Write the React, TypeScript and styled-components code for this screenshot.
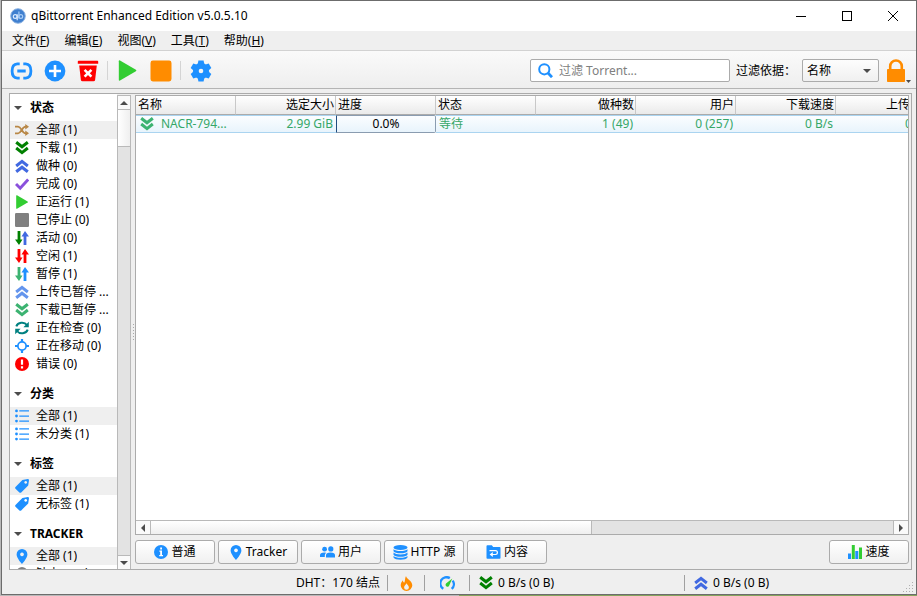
import React from "react";
import styled, { createGlobalStyle, css } from "styled-components";

const Global = createGlobalStyle`
  * { box-sizing: border-box; }
  html, body { margin: 0; padding: 0; }
  body {
    background: linear-gradient(90deg, #b9b9b9 0, #b9b9b9 50%, #86a35c 50%, #86a35c 100%);
    color: #000;
    overflow: hidden;
  }
  body, button, input, select, table {
    font-family: "Noto Sans", "Noto Sans CJK SC", sans-serif;
    font-size: 12px;
    line-height: 18px;
  }
  button, input, select { margin: 0; padding: 0; color: inherit; }
  svg { display: block; flex: none; }
`;

const BLUE = "#1e90ff";
const NAVY = "#4169e1";
const GREEN = "#32cd32";
const DARK_GREEN = "#008000";
const SEA = "#3cb371";
const ORANGE = "#ff8c00";

const AppWindow = styled.div`
  display: flex;
  flex-direction: column;
  height: calc(100vh - 1px);
  margin-left: 1px;
  background: #efefef;
  border: 1px solid #6c6c6c;
`;

/* Title bar */
const TitleBar = styled.header`
  display: flex;
  align-items: center;
  height: 30px;
  flex: none;
  padding-left: 8px;
  background: #fff;
`;
const Title = styled.h1`
  flex: 1;
  margin: 0 0 0 5px;
  font-size: 12px;
  font-weight: 400;
`;
const CaptionButton = styled.button`
  display: flex;
  align-items: center;
  justify-content: center;
  width: 46px;
  height: 30px;
  border: 0;
  background: transparent;
`;

/* Menu bar */
const MenuBar = styled.nav`
  display: flex;
  flex: none;
  gap: 1px;
  height: 20px;
  padding: 1px 3px 0;
  border-bottom: 1px solid #d2d2d2;
`;
const MenuButton = styled.button`
  padding: 0 7px;
  border: 0;
  background: transparent;
  u { text-underline-offset: 1px; }
`;

/* Tool bar */
const ToolBar = styled.div`
  display: flex;
  align-items: center;
  flex: none;
  height: 38px;
  padding: 2px 4px 0 3px;
  background: linear-gradient(#fafafa, #eeeeee);
  border-bottom: 1px solid #b4b4b4;
`;
const ToolButton = styled.button`
  position: relative;
  display: flex;
  align-items: center;
  justify-content: center;
  width: 33px;
  height: 32px;
  flex: none;
  border: 0;
  background: transparent;
`;
const ToolDivider = styled.span`
  width: 1px;
  height: 19px;
  margin: 0 3px;
  background: #d4d4d4;
`;
const Spacer = styled.span`
  flex: 1;
`;
const SearchBox = styled.label`
  display: flex;
  align-items: center;
  gap: 6px;
  width: 200px;
  height: 23px;
  padding: 0 7px;
  background: #fff;
  border: 1px solid #ababab;
  border-radius: 2px;
`;
const SearchInput = styled.input`
  flex: 1;
  min-width: 0;
  border: 0;
  outline: 0;
  background: transparent;
  &::placeholder { color: #808080; opacity: 1; }
`;
const FilterLabel = styled.label`
  width: 66px;
  margin-left: 6px;
  white-space: nowrap;
`;
const SelectWrap = styled.span`
  display: grid;
  align-items: center;
  width: 77px;
  height: 23px;
  border: 1px solid #ababab;
  border-radius: 2px;
  background: linear-gradient(#fdfdfd, #f0f0f0);
  > * { grid-area: 1 / 1; }
  > svg { justify-self: end; margin-right: 7px; pointer-events: none; }
`;
const FilterSelect = styled.select`
  appearance: none;
  width: 100%;
  height: 21px;
  padding: 0 20px 0 4px;
  border: 0;
  background: transparent;
`;
const MenuMark = styled.svg`
  position: absolute;
  right: 1px;
  bottom: 4px;
`;

/* Main area */
const Main = styled.main`
  display: flex;
  flex: 1;
  min-height: 0;
  margin: 4px 4px 0 7px;
  border: 1px solid #ababab;
`;
const SideBar = styled.aside`
  display: flex;
  flex: none;
  width: 121px;
`;
const FilterList = styled.div`
  flex: 1;
  min-width: 0;
  padding-top: 1px;
  overflow: hidden;
  background: #fff;
`;
const FilterGroup = styled.section`
  margin-bottom: 8px;
`;
const GroupHeader = styled.button`
  display: flex;
  align-items: center;
  gap: 8px;
  width: 100%;
  height: 26px;
  padding-left: 4px;
  border: 0;
  background: transparent;
  font-weight: 700;
`;
const FilterRow = styled.button<{ $active?: boolean }>`
  display: flex;
  align-items: center;
  gap: 7px;
  width: 100%;
  height: 18px;
  padding: 0 5px;
  border: 0;
  background: ${(p) => (p.$active ? "#efefef" : "transparent")};
  white-space: nowrap;
  text-align: left;
`;
const FilterText = styled.span`
  overflow: hidden;
  text-overflow: ellipsis;
`;
const Gutter = styled.div`
  display: flex;
  align-items: center;
  justify-content: center;
  width: 4px;
  flex: none;
  &::after {
    content: "";
    width: 1px;
    height: 16px;
    background: repeating-linear-gradient(#a8a8a8 0 1px, transparent 1px 3px);
  }
`;

/* Scroll bars */
const ScrollBar = styled.div<{ $across?: boolean }>`
  display: flex;
  flex: none;
  background: #e3e3e3;
  ${(p) =>
    p.$across
      ? css`
          height: 14px;
          border-top: 1px solid #b9b9b9;
        `
      : css`
          flex-direction: column;
          width: 14px;
          margin-top: 1px;
          border: 1px solid #b9b9b9;
          border-width: 1px 1px 0 1px;
        `}
`;
const ScrollStep = styled.button<{ $across?: boolean }>`
  display: flex;
  align-items: center;
  justify-content: center;
  flex: none;
  width: ${(p) => (p.$across ? "14px" : "12px")};
  height: 13px;
  border: 0;
  background: #fafafa;
`;
const ScrollTrack = styled.div<{ $across?: boolean }>`
  display: flex;
  flex: 1;
  flex-direction: ${(p) => (p.$across ? "row" : "column")};
  border: 0 solid #b9b9b9;
  border-width: ${(p) => (p.$across ? "0 1px" : "1px 0")};
`;
const ScrollThumb = styled.div<{ $across?: boolean }>`
  background: linear-gradient(${(p) => (p.$across ? "180deg" : "90deg")}, #fff, #efefef);
  ${(p) =>
    p.$across
      ? css`
          width: 59.5%;
          border-right: 1px solid #b9b9b9;
        `
      : css`
          height: 37px;
          border-bottom: 1px solid #b9b9b9;
        `}
`;

/* Transfer table */
const Content = styled.div`
  display: flex;
  flex-direction: column;
  flex: 1;
  min-width: 0;
  padding: 1px 2px 5px 0;
`;
const TableFrame = styled.div`
  display: flex;
  flex-direction: column;
  flex: 1;
  min-height: 0;
  border: 1px solid #ababab;
  background: #fff;
`;
const TableView = styled.div`
  flex: 1;
  min-height: 0;
  overflow: hidden;
`;
const Table = styled.table`
  width: 800px;
  table-layout: fixed;
  border-collapse: separate;
  border-spacing: 0;
`;
const HeadCell = styled.th<{ $right?: boolean }>`
  height: 19px;
  padding: 0 1px 0 2px;
  border-right: 1px solid #c8c8c8;
  border-bottom: 1px solid #ababab;
  background: linear-gradient(#fff, #eaeaea);
  font-weight: 400;
  line-height: 18px;
  text-align: ${(p) => (p.$right ? "right" : "left")};
`;
const Cell = styled.td<{ $right?: boolean }>`
  height: 18px;
  padding: 0 3px;
  border: 0 solid #aad4f0;
  border-width: 1px 0;
  background: linear-gradient(#fbfdff, #e8f4fc);
  color: #36a768;
  line-height: 16px;
  white-space: nowrap;
  overflow: hidden;
  text-overflow: ellipsis;
  text-align: ${(p) => (p.$right ? "right" : "left")};
`;
const ProgressCell = styled(Cell)`
  padding: 0;
  border-color: #8a9cb0;
  border-left: 1px solid #1f4d80;
  border-right: 1px solid #8a9cb0;
  border-radius: 0 2px 2px 0;
  color: #000;
  text-align: center;
`;
const NameBox = styled.span`
  display: flex;
  align-items: center;
  gap: 7px;
  margin-left: 1px;
`;

/* Detail tabs */
const Tabs = styled.div`
  display: flex;
  flex: none;
  gap: 3px;
  padding-top: 5px;
`;
const TabButton = styled.button`
  display: flex;
  align-items: center;
  justify-content: center;
  gap: 3px;
  width: 80px;
  height: 24px;
  flex: none;
  border: 1px solid #ababab;
  border-radius: 3px;
  background: linear-gradient(#fff, #f0f0f0);
  white-space: nowrap;
`;

/* Status bar */
const StatusBar = styled.footer`
  display: flex;
  align-items: center;
  flex: none;
  height: 24px;
  padding-top: 2px;
`;
const StatusText = styled.span`
  flex: 1;
  padding-right: 7px;
  text-align: right;
`;
const StatusItem = styled.button<{ $width: number }>`
  display: flex;
  align-items: center;
  justify-content: ${(p) => (p.$width > 100 ? "flex-start" : "center")};
  gap: 5px;
  width: ${(p) => p.$width}px;
  height: 16px;
  padding-left: ${(p) => (p.$width > 100 ? "9px" : "0")};
  border: 0;
  border-left: 1px solid #a0a0a0;
  background: transparent;
`;
const Grip = styled.svg`
  align-self: flex-end;
  margin-left: 3px;
`;

/* Icons */
type GlyphProps = { color: string; size?: number };

const Chevrons = ({ color, up, size = 14 }: GlyphProps & { up?: boolean }) => (
  <svg width={size} height={size} viewBox="0 0 14 14" fill="none" stroke={color} strokeWidth="3">
    {up ? <path d="M1.2 7 7 2.4 12.8 7M1.2 12.800 7 8.200l5.800 4.600" /> : <path d="M1.2 1.200 7 5.800l5.800-4.600M1.200 7 7 11.600 12.800 7" />}
  </svg>
);
const Arrows = ({ down, up }: { down: string; up: string }) => (
  <svg width="14" height="14" viewBox="0 0 14 14">
    <path d="M0 8.500h2.600V0h2.800v8.500H7.500L4 14z" fill={down} />
    <path d="M6.500 5.500h2.100V14h2.800V5.500H14L10 0z" fill={up} />
  </svg>
);
const Play = ({ size = 14 }: { size?: number }) => (
  <svg width={size} height={size} viewBox="0 0 14 14">
    <path d="M1.2.8Q1.2 0 2 .3L12.6 6.5q.7.5 0 1L2 13.7q-.8.3-.8-.5z" fill={GREEN} />
  </svg>
);
const Shuffle = () => (
  <svg width="14" height="14" viewBox="0 0 15 14">
    <path d="M0 3.5h3.3c3.6 0 4.2 7 8 7H13M0 10.5h3.3c3.6 0 4.2-7 8-7H13" fill="none" stroke="#b88746" strokeWidth="1.9" />
    <path d="M11 .5l4 3-4 3zM11 7.5l4 3-4 3z" fill="#b88746" />
  </svg>
);
const Check = () => (
  <svg width="14" height="14" viewBox="0 0 14 14">
    <path d="M1 7l4.2 4.2L13.2 2.4" fill="none" stroke="#8a50dc" strokeWidth="3" />
  </svg>
);
const Square = () => (
  <svg width="14" height="14" viewBox="0 0 14 14">
    <rect width="14" height="14" rx="1.2" fill="#808080" />
  </svg>
);
const Refresh = () => (
  <svg width="14" height="14" viewBox="0 0 14 14">
    <path d="M1.3 5.4A6 5.2 0 0 1 12 4M12.7 8.6A6 5.2 0 0 1 2 10" fill="none" stroke="#008080" strokeWidth="2" />
    <path d="M13.8.8v5.4H8.4zM.2 13.2V7.8h5.4z" fill="#008080" />
  </svg>
);
const Target = () => (
  <svg width="14" height="14" viewBox="0 0 14 14" fill="none" stroke={BLUE} strokeWidth="1.7">
    <circle cx="7" cy="7" r="4.1" />
    <path d="M7 0v3M7 11v3M0 7h3M11 7h3" strokeWidth="2.2" />
  </svg>
);
const ErrorMark = () => (
  <svg width="14" height="14" viewBox="0 0 14 14">
    <circle cx="7" cy="7" r="7" fill="#f00" />
    <path d="M5.9 2.6h2.2v5.2H5.9zM5.9 9.3h2.2v2.2H5.9z" fill="#fff" />
  </svg>
);
const Lines = () => (
  <svg width="14" height="14" viewBox="0 0 14 14" fill={BLUE}>
    <path d="M4.3 1.3H14v1.3H4.3zM4.3 6.4H14v1.3H4.3zM4.3 11.5H14v1.3H4.3z" />
    <circle cx="1.5" cy="1.9" r="1.4" />
    <circle cx="1.5" cy="7" r="1.4" />
    <circle cx="1.5" cy="12.1" r="1.4" />
  </svg>
);
const Tag = () => (
  <svg width="14" height="14" viewBox="0 0 14 14">
    <path fillRule="evenodd" d="M7.4.9 12.8 0q1.2 0 1.2 1.2l-.8 5.2-7 7q-.9.8-1.8 0L.5 9.7q-.8-.9 0-1.800zM10.700 2a1.400 1.400 0 1 0 .01 0z" fill={BLUE} />
  </svg>
);
const Pin = ({ color = BLUE }: { color?: string }) => (
  <svg width="14" height="15" viewBox="0 0 14 15">
    <path fillRule="evenodd" d="M7 0a5.4 5.4 0 0 1 5.4 5.4C12.4 9 7 15 7 15S1.6 9 1.6 5.4A5.4 5.4 0 0 1 7 0zm0 3.5a1.9 1.9 0 1 0 .01 0z" fill={color} />
  </svg>
);
const Triangle = ({ turn = "down", size = 8 }: { turn?: "down" | "up" | "left" | "right"; size?: number }) => {
  const d = { down: "M0 2h8L4 6z", up: "M0 6h8L4 2z", left: "M6 0v8L2 4z", right: "M2 0v8l4-4z" }[turn];
  return (
    <svg width={size} height={size} viewBox="0 0 8 8">
      <path d={d} fill="#4c4c4c" />
    </svg>
  );
};
const Logo = () => (
  <svg width="16" height="16" viewBox="0 0 16 16" fill="none">
    <circle cx="8" cy="8" r="7.3" fill="#3f7fcf" stroke="#8fb4e2" strokeWidth="1" />
    <g strokeWidth="1.2">
      <circle cx="5.2" cy="8.5" r="1.9" stroke="#dcebff" />
      <path d="M7.2 6.2v6" stroke="#dcebff" />
      <circle cx="10.8" cy="8.5" r="1.9" stroke="#a9cdf7" />
      <path d="M8.9 3.5v7" stroke="#a9cdf7" />
    </g>
  </svg>
);
const Link = () => (
  <svg width="23" height="18" viewBox="0 0 22 18" fill="none" stroke={BLUE} strokeWidth="2.8">
    <path d="M9.2 1.9H6.800Q1.600 2.200 1.600 9t5.200 7.100h2.400M12.800 1.900h2.400Q20.400 2.200 20.400 9t-5.200 7.100h-2.400M6.800 9h8.400" />
  </svg>
);
const Plus = () => (
  <svg width="22" height="22" viewBox="0 0 22 22">
    <circle cx="11" cy="11" r="10.4" fill={BLUE} />
    <path d="M11 5v12M5 11h12" stroke="#fff" strokeWidth="2.6" />
  </svg>
);
const Trash = () => (
  <svg width="22" height="22" viewBox="0 0 22 22">
    <path d="M1.6.7h18.8q.8 0 .8.8v2.3H.8V1.5q0-.8.8-.8zM2.2 5.6h17.6l-1.7 14.3q-.2 1.4-1.6 1.4h-11q-1.4 0-1.6-1.4z" fill="#f00" />
    <path d="M7.6 9.8l6.8 6.8M14.4 9.8l-6.8 6.8" stroke="#fff" strokeWidth="2.6" />
  </svg>
);
const Stop = () => (
  <svg width="22" height="22" viewBox="0 0 22 22">
    <rect x=".5" y=".5" width="21" height="21" rx="2.4" fill={ORANGE} />
  </svg>
);
const Gear = () => (
  <svg width="22" height="22" viewBox="0 0 22 22">
    <g fill={BLUE}>
      <circle cx="11" cy="11" r="8" />
      {[0, 60, 120].map((a) => (
        <path key={a} d="M8.4.6h5.2l.8 4v12.8l-.8 4H8.4l-.8-4V4.6z" transform={`rotate(${a} 11 11)`} />
      ))}
    </g>
    <circle cx="11" cy="11" r="2.3" fill="#f5f5f5" />
  </svg>
);
const Search = () => (
  <svg width="15" height="15" viewBox="0 0 15 15" fill="none" stroke={BLUE}>
    <circle cx="6.3" cy="6.3" r="5.1" strokeWidth="2" />
    <path d="M10 10l4 4.2" strokeWidth="2.8" />
  </svg>
);
const Lock = () => (
  <svg width="20" height="24" viewBox="0 0 20 24">
    <path d="M4.2 11V7.3a5.8 5.8 0 0 1 11.6 0V11" fill="none" stroke={ORANGE} strokeWidth="2.6" />
    <rect x="1" y="10" width="18" height="13" rx=".8" fill={ORANGE} />
  </svg>
);
const Info = () => (
  <svg width="14" height="14" viewBox="0 0 14 14">
    <circle cx="7" cy="7" r="7" fill={BLUE} />
    <path d="M6.2 2.6h1.8v1.8H6.2zM5.4 5.6H8v4.5h1v1.1H5.2v-1.1h1V6.7h-.8z" fill="#fff" />
  </svg>
);
const Peers = () => (
  <svg width="15" height="12" viewBox="0 0 15 12" fill={BLUE}>
    <circle cx="4.6" cy="3.2" r="2.4" />
    <circle cx="10.8" cy="2.9" r="2.6" />
    <path d="M0 11V9.2q0-2.6 4.4-2.6 1 0 1.8.2-1.4 1-1.4 2.6V11zM6 11.4V9.2q0-2.6 4.5-2.6T15 9.2v2.2z" />
  </svg>
);
const Database = () => (
  <svg width="15" height="15" viewBox="0 0 15 15" fill={BLUE}>
    <ellipse cx="7.5" cy="2.6" rx="7" ry="2.5" />
    <path d="M.5 4.3q2 1.8 7 1.8t7-1.8v2q-1.6 2-7 2t-7-2zM.5 7.6q2 1.9 7 1.9t7-1.9v2.1q-1.6 2-7 2t-7-2zM.5 11q2 1.8 7 1.8t7-1.8v1.6q-1.6 2.2-7 2.2t-7-2.2z" />
  </svg>
);
const FolderSync = () => (
  <svg width="15" height="14" viewBox="0 0 15 14">
    <path d="M.5 1.2q0-.9.9-.9h4.4l1.4 1.6h6.4q.9 0 .9.9v10.1q0 .8-.9.8H1.4q-.9 0-.9-.8z" fill={BLUE} />
    <path d="M3.5 5.7h6q1.9 0 1.9 1.9t-1.9 1.9H6" fill="none" stroke="#fff" strokeWidth="1.2" />
    <path d="M6.8 7.1v4.8L3.6 9.5z" fill="#fff" />
  </svg>
);
const Bars = () => (
  <svg width="14" height="14" viewBox="0 0 14 14">
    <path d="M0 8.5h3V14H0zM7.3 6h3v8h-3z" fill={BLUE} />
    <path d="M3.8 0h3v14h-3zM11 2.4h3V14h-3z" fill={GREEN} />
  </svg>
);
const Flame = () => (
  <svg width="13" height="15" viewBox="0 0 13 15">
    <path fillRule="evenodd" d="M6 0c.2 2.9 6.3 4.6 6.3 9.3A5.8 5.8 0 0 1 6.5 15 5.8 5.8 0 0 1 .7 9.3C.7 7 2 5.2 3 4.2c0 1.3.3 2.1 1.2 2.5C5.4 5 4.7 2 6 0zm.7 7.3C5.8 9 4.1 9.6 4.1 11.4a2.4 2.4 0 0 0 4.8 0C8.9 9.8 7.2 9 6.7 7.3z" fill={ORANGE} />
  </svg>
);
const Gauge = () => (
  <svg width="15" height="14" viewBox="0 0 15 14">
    <path d="M3.3 12.8A6 6 0 0 1 9.8 2.1M12.6 4.6A6 6 0 0 1 11.700 12.800" fill="none" stroke={BLUE} strokeWidth="2.4" />
    <path d="M12.300 2.400 9.200 9.600a1.900 1.900 0 1 1-3.200-2z" fill={GREEN} />
  </svg>
);

const STATUS_FILTERS: [React.ReactNode, string][] = [
  [<Shuffle />, "全部 (1)"],
  [<Chevrons color={DARK_GREEN} />, "下载 (1)"],
  [<Chevrons color={NAVY} up />, "做种 (0)"],
  [<Check />, "完成 (0)"],
  [<Play />, "正运行 (1)"],
  [<Square />, "已停止 (0)"],
  [<Arrows down={DARK_GREEN} up={NAVY} />, "活动 (0)"],
  [<Arrows down="#f00" up="#f00" />, "空闲 (1)"],
  [<Arrows down={SEA} up={BLUE} />, "暂停 (1)"],
  [<Chevrons color="#6495ed" up />, "上传已暂停 ..."],
  [<Chevrons color={SEA} />, "下载已暂停 ..."],
  [<Refresh />, "正在检查 (0)"],
  [<Target />, "正在移动 (0)"],
  [<ErrorMark />, "错误 (0)"],
];

const GROUPS: { title: string; rows: [React.ReactNode, string][] }[] = [
  { title: "状态", rows: STATUS_FILTERS },
  { title: "分类", rows: [[<Lines />, "全部 (1)"], [<Lines />, "未分类 (1)"]] },
  { title: "标签", rows: [[<Tag />, "全部 (1)"], [<Tag />, "无标签 (1)"]] },
  { title: "TRACKER", rows: [[<Pin />, "全部 (1)"], [<Pin color="#808080" />, "缺少 tracker"]] },
];

const MENUS = [
  ["文件", "F"],
  ["编辑", "E"],
  ["视图", "V"],
  ["工具", "T"],
  ["帮助", "H"],
];

const COLUMNS: [string, boolean][] = [
  ["名称", false],
  ["选定大小", true],
  ["进度", false],
  ["状态", false],
  ["做种数", true],
  ["用户", true],
  ["下载速度", true],
  ["上传速度", true],
];

const TABS: [React.ReactNode, string][] = [
  [<Info />, "普通"],
  [<Pin />, "Tracker"],
  [<Peers />, "用户"],
  [<Database />, "HTTP 源"],
  [<FolderSync />, "内容"],
];

export default function App() {
  return (
    <>
      <Global />
      <AppWindow>
        <TitleBar>
          <Logo />
          <Title>qBittorrent Enhanced Edition v5.0.5.10</Title>
          <CaptionButton aria-label="最小化">
            <svg width="10" height="10"><path d="M0 5.5h10" stroke="#000" /></svg>
          </CaptionButton>
          <CaptionButton aria-label="最大化">
            <svg width="10" height="10"><rect x=".5" y=".5" width="9" height="9" fill="none" stroke="#000" /></svg>
          </CaptionButton>
          <CaptionButton aria-label="关闭">
            <svg width="10" height="10"><path d="M0 0l10 10M10 0L0 10" stroke="#000" /></svg>
          </CaptionButton>
        </TitleBar>

        <MenuBar>
          {MENUS.map(([name, key]) => (
            <MenuButton key={key}>{name}(<u>{key}</u>)</MenuButton>
          ))}
        </MenuBar>

        <ToolBar>
          <ToolButton aria-label="添加链接"><Link /></ToolButton>
          <ToolButton aria-label="添加文件"><Plus /></ToolButton>
          <ToolButton aria-label="移除"><Trash /></ToolButton>
          <ToolDivider />
          <ToolButton aria-label="启动"><Play size={21} /></ToolButton>
          <ToolButton aria-label="停止"><Stop /></ToolButton>
          <ToolDivider />
          <ToolButton aria-label="选项"><Gear /></ToolButton>
          <Spacer />
          <SearchBox>
            <Search />
            <SearchInput placeholder="过滤 Torrent..." aria-label="过滤 Torrent" />
          </SearchBox>
          <FilterLabel htmlFor="filter-by">过滤依据：</FilterLabel>
          <SelectWrap>
            <FilterSelect id="filter-by" defaultValue="名称">
              <option>名称</option>
            </FilterSelect>
            <Triangle />
          </SelectWrap>
          <ToolButton aria-label="锁定">
            <Lock />
            <MenuMark width="5" height="3"><path d="M0 0h5L2.5 3z" fill="#4c4c4c" /></MenuMark>
          </ToolButton>
        </ToolBar>

        <Main>
          <SideBar>
            <FilterList>
              {GROUPS.map((group) => (
                <FilterGroup key={group.title}>
                  <GroupHeader><Triangle />{group.title}</GroupHeader>
                  {group.rows.map(([icon, text], i) => (
                    <FilterRow key={text} $active={i === 0}>
                      {icon}
                      <FilterText>{text}</FilterText>
                    </FilterRow>
                  ))}
                </FilterGroup>
              ))}
            </FilterList>
            <ScrollBar>
              <ScrollStep aria-label="向上"><Triangle turn="up" /></ScrollStep>
              <ScrollTrack><ScrollThumb /></ScrollTrack>
              <ScrollStep aria-label="向下"><Triangle /></ScrollStep>
            </ScrollBar>
          </SideBar>
          <Gutter />
          <Content>
            <TableFrame>
              <TableView>
                <Table>
                  <thead>
                    <tr>
                      {COLUMNS.map(([name, right]) => (
                        <HeadCell key={name} $right={right} scope="col">{name}</HeadCell>
                      ))}
                    </tr>
                  </thead>
                  <tbody>
                    <tr>
                      <Cell><NameBox><Chevrons color={SEA} />NACR-794...</NameBox></Cell>
                      <Cell $right>2.99 GiB</Cell>
                      <ProgressCell>0.0%</ProgressCell>
                      <Cell>等待</Cell>
                      <Cell $right>1 (49)</Cell>
                      <Cell $right>0 (257)</Cell>
                      <Cell $right>0 B/s</Cell>
                      <Cell $right>0 B/s</Cell>
                    </tr>
                  </tbody>
                </Table>
              </TableView>
              <ScrollBar $across>
                <ScrollStep $across aria-label="向左"><Triangle turn="left" /></ScrollStep>
                <ScrollTrack $across><ScrollThumb $across /></ScrollTrack>
                <ScrollStep $across aria-label="向右"><Triangle turn="right" /></ScrollStep>
              </ScrollBar>
            </TableFrame>
            <Tabs>
              {TABS.map(([icon, text]) => (
                <TabButton key={text}>{icon}{text}</TabButton>
              ))}
              <Spacer />
              <TabButton><Bars />速度</TabButton>
            </Tabs>
          </Content>
        </Main>

        <StatusBar>
          <StatusText>DHT：170 结点</StatusText>
          <StatusItem $width={37} aria-label="连接状态"><Flame /></StatusItem>
          <StatusItem $width={45} aria-label="备用速度限制"><Gauge /></StatusItem>
          <StatusItem $width={215}><Chevrons color={DARK_GREEN} />0 B/s (0 B)</StatusItem>
          <StatusItem $width={215}><Chevrons color={NAVY} up />0 B/s (0 B)</StatusItem>
          <Grip width="14" height="14" fill="#b0b0b0">
            <path d="M10 2h1v1h-1zM7 5h1v1H7zM10 5h1v1h-1zM4 8h1v1H4zM7 8h1v1H7zM10 8h1v1h-1zM1 11h1v1H1zM4 11h1v1H4zM7 11h1v1H7zM10 11h1v1h-1z" />
          </Grip>
        </StatusBar>
      </AppWindow>
    </>
  );
}
